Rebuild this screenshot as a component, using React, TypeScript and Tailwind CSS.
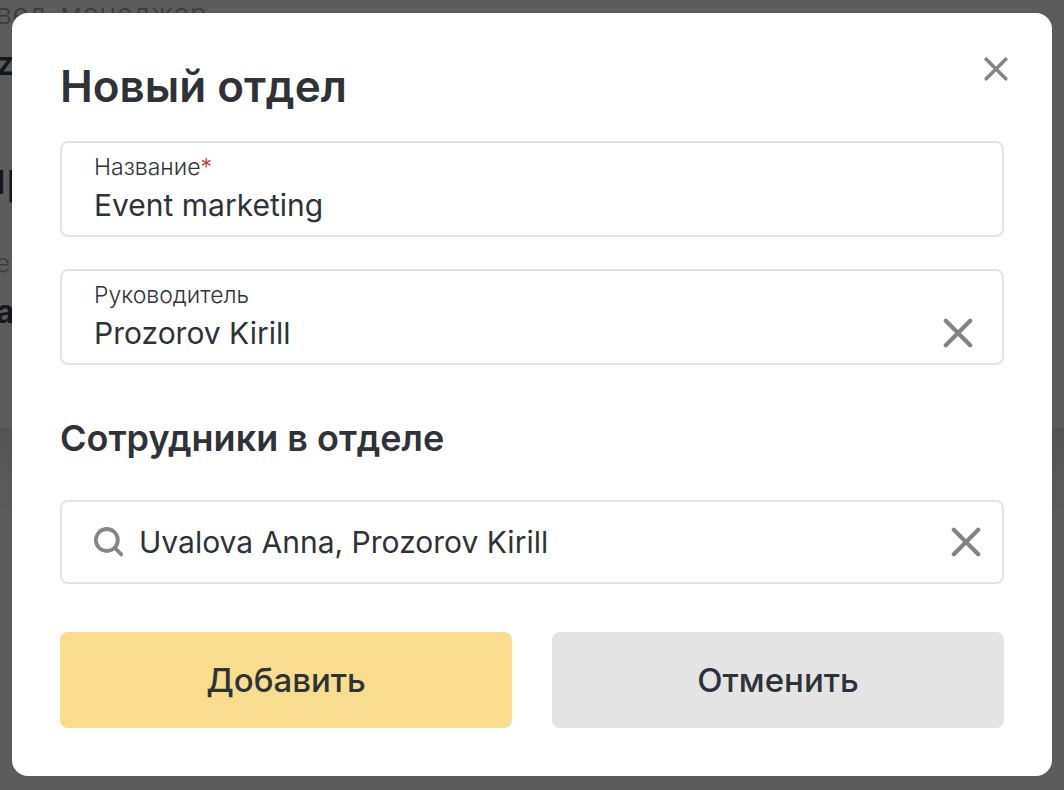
import React, { useState } from "react";

type CrossProps = {
    label: string;
    onClick?: () => void;
    className: string;
    iconClass: string;
    strokeWidth: number;
}

// Cross button, used for closing the dialog and clearing the fields
function CrossButton({ label, onClick, className, iconClass, strokeWidth }: CrossProps) {
    return (
        <button type="button" aria-label={label} onClick={onClick} className={`shrink-0 ${className}`}>
            <svg viewBox="0 0 30 30" fill="none" stroke="currentColor" strokeWidth={strokeWidth} strokeLinecap="round" className={iconClass}>
                <path d="M2.8 2.8L27.2 27.2M27.2 2.8L2.8 27.2" />
            </svg>
        </button>
    );
}

function SearchIcon() {
    return (
        <svg viewBox="0 0 30 30" fill="none" stroke="currentColor" strokeWidth={3.8} strokeLinecap="round" className="size-[30px] shrink-0 text-[#868686]">
            <circle cx="12.8" cy="13" r="11" />
            <path d="M21.5 21.5L27.2 27.4" />
        </svg>
    );
}

// Page under the dialog
function PageBehind() {
    return (
        <div aria-hidden="true" className="absolute inset-0 -z-10 overflow-hidden bg-[#5c5c5c] text-[#16171c]">
            <div className="-mt-1 -ml-1 h-12 whitespace-nowrap text-[28px] leading-9 font-light tracking-wide text-[#3a3b3d]">вед-менеджер</div>
            <div className="-ml-1 h-28 text-[32px] leading-10 font-semibold">z</div>
            <div className="-ml-5 h-24 text-[44px] leading-11 font-medium">пр</div>
            <div className="-ml-1 h-12 text-2xl leading-6 font-light text-[#3a3b3d]">е</div>
            <div className="-ml-1 h-32 text-[32px] leading-6 font-bold">а</div>
            <div className="h-20 bg-linear-to-b from-[#545454] to-[#5a5a5a]"></div>
        </div>
    );
}

export default function App() {
    const [name, setName] = useState("Event marketing")
    const [head, setHead] = useState("Prozorov Kirill")
    const [employees, setEmployees] = useState("Uvalova Anna, Prozorov Kirill")

    return (
        <div className="relative isolate min-h-screen px-3 pt-[13px] pb-3.5 font-['Inter','Noto_Sans',sans-serif] text-[#2f3338]">
            <PageBehind />

            <form role="dialog" aria-labelledby="dialog-title" onSubmit={(e) => e.preventDefault()} className="rounded-2xl bg-white p-12">
                {/* Heading */}
                <div className="flex items-start justify-between">
                    <h1 id="dialog-title" className="text-[44px] leading-[50px] font-semibold">Новый отдел</h1>
                    <CrossButton label="Закрыть" className="-mt-3 -mr-3 p-2 text-[#868686]" iconClass="size-6" strokeWidth={4.6} />
                </div>

                {/* Name */}
                <div className="mt-[30px] h-24 rounded-lg border-2 border-[#e4e4e4] px-8 pt-2">
                    <label htmlFor="name" className="block text-[23px] leading-8 font-light">
                        Название<span className="text-[#c9302c]">*</span>
                    </label>
                    <input
                        id="name"
                        value={name}
                        onChange={(e) => setName(e.target.value)}
                        className="block h-11 w-full text-[30px] outline-none"
                    />
                </div>

                {/* Head of the department */}
                <div className="mt-8 h-24 rounded-lg border-2 border-[#e4e4e4] pt-2 pr-[29px] pl-8">
                    <label htmlFor="head" className="block text-[23px] leading-8 font-light">Руководитель</label>
                    <div className="flex items-center">
                        <input
                            id="head"
                            value={head}
                            onChange={(e) => setHead(e.target.value)}
                            className="h-11 min-w-0 flex-1 text-[30px] outline-none"
                        />
                        <CrossButton label="Очистить руководителя" onClick={() => setHead("")} className="text-[#828388]" iconClass="size-[30px]" strokeWidth={4.2} />
                    </div>
                </div>

                {/* Employees */}
                <h2 className="mt-12 text-[36px] leading-[50px] font-semibold">
                    <label htmlFor="employees">Сотрудники в отделе</label>
                </h2>
                <div className="mt-[37px] flex h-[84px] items-center rounded-lg border-2 border-[#e4e4e4] pr-[21px] pl-8">
                    <SearchIcon />
                    <input
                        id="employees"
                        value={employees}
                        onChange={(e) => setEmployees(e.target.value)}
                        className="ml-[15px] h-11 min-w-0 flex-1 text-[30px] outline-none"
                    />
                    <CrossButton label="Очистить сотрудников" onClick={() => setEmployees("")} className="text-[#828388]" iconClass="size-[30px]" strokeWidth={4.2} />
                </div>

                {/* Actions */}
                <div className="mt-12 grid grid-cols-2 gap-10">
                    <button type="submit" className="h-24 rounded-lg bg-[#f8dd8f] pt-0.5 text-[33px] font-medium">Добавить</button>
                    <button type="button" className="h-24 rounded-lg bg-[#e4e4e4] pt-0.5 text-[33px] font-medium">Отменить</button>
                </div>
            </form>
        </div>
    );
}
